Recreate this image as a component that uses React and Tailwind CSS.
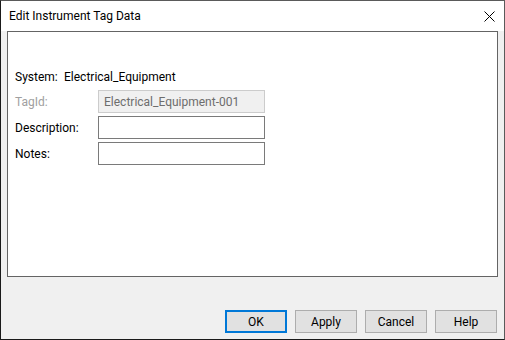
import React from 'react';

const font = { fontFamily: '"Segoe UI", Roboto, "Noto Sans", sans-serif' };

function Field({ label, value, disabled }) {
  return (
    <div className="flex items-center h-[23px]">
      <span className={`w-[83px] text-[12px] ${disabled ? 'text-[#a0a0a0]' : 'text-black'}`}>{label}</span>
      <div
        className={`w-[167px] h-[23px] border flex items-center px-[5px] text-[12px] ${
          disabled ? 'bg-[#f0f0f0] border-[#cccccc] text-[#6d6d6d]' : 'bg-white border-[#7a7a7a] text-black'
        }`}
      >
        {value}
      </div>
    </div>
  );
}

export default function App() {
  const buttons = ['OK', 'Apply', 'Cancel', 'Help'];

  return (
    <div
      className="w-[505px] h-[340px] flex flex-col border border-[#5a5a5a] border-l-[#1a1a1a] border-b-[#1a1a1a] bg-[#f0f0f0] overflow-hidden"
      style={font}
    >
      {/* Title bar */}
      <div className="h-[30px] bg-white flex items-center justify-between pl-[8px] pr-[9px] shrink-0">
        <span className="text-[12px] text-black">Edit Instrument Tag Data</span>
        <svg width="11" height="11" viewBox="0 0 11 11" className="mt-[1px]">
          <path d="M0.5 0.5 L10.5 10.5 M10.5 0.5 L0.5 10.5" stroke="#000" strokeWidth="1" fill="none" />
        </svg>
      </div>

      {/* Body */}
      <div className="flex-1 flex flex-col px-[6px]">
        <div className="h-[246px] bg-white border border-[#646464] pt-[36px] pl-[7px] flex flex-col">
          <div className="flex items-center h-[17px] text-[12px] text-black">
            <span className="w-[49px]">System:</span>
            <span>Electrical_Equipment</span>
          </div>
          <div className="mt-[5px] flex flex-col gap-[3px]">
            <Field label="TagId:" value="Electrical_Equipment-001" disabled />
            <Field label="Description:" value="" />
            <Field label="Notes:" value="" />
          </div>
        </div>

        <div className="mt-[33px] pr-[1px] flex justify-end gap-[8px]">
          {buttons.map((b) => (
            <button
              key={b}
              className={`w-[62px] h-[23px] bg-[#e1e1e1] text-[12px] text-black flex items-center justify-center ${
                b === 'OK' ? 'border-2 border-[#0078d7]' : 'border border-[#adadad]'
              }`}
            >
              {b}
            </button>
          ))}
        </div>
      </div>
    </div>
  );
}
